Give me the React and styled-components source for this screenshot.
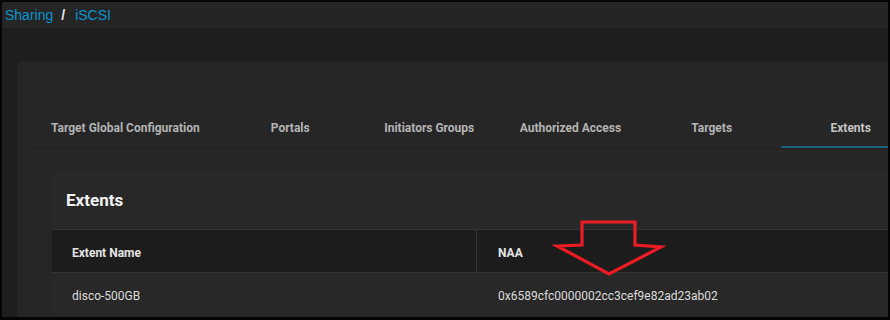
import React from 'react'
import styled, { createGlobalStyle } from 'styled-components'

const GlobalStyle = createGlobalStyle`
  html, body {
    margin: 0;
    padding: 0;
    background: #000000;
  }
  body {
    font-family: Roboto, 'Liberation Sans', sans-serif;
  }
`

const Frame = styled.div`
  width: 890px;
  height: 320px;
  box-sizing: border-box;
  border: 2px solid #050505;
  border-bottom-width: 3px;
  background-color: #1e1e1e;
  overflow: hidden;
  position: relative;
`

const TopBar = styled.div`
  height: 26px;
  background-color: #252525;
  display: flex;
  align-items: center;
  gap: 8px;
  padding-left: 3px;
  font-family: 'Liberation Sans', Arial, sans-serif;
  font-size: 14px;
`

const Crumb = styled.span`
  color: ${p => (p.$sep ? '#e6e6e6' : '#0b94cf')};
  font-weight: ${p => (p.$sep ? 700 : 400)};
  margin: ${p => (p.$sep ? '0 2px 0 0' : '0')};
`

const Main = styled.div`
  padding: 34px 0 0 15px;
`

const Card = styled.div`
  width: 1000px;
  height: 400px;
  background-color: #262626;
  border-radius: 5px;
  padding: 38px 0 0 13px;
  box-sizing: border-box;
`

const TabBar = styled.div`
  display: flex;
  border-bottom: 1px solid #202020;
  height: 48px;
`

const Tab = styled.div`
  min-width: 139px;
  padding: 8px 21px 0;
  box-sizing: border-box;
  display: flex;
  align-items: center;
  justify-content: center;
  font-size: 12px;
  font-weight: 700;
  color: ${p => (p.$active ? '#c4c4c4' : '#b4b4b4')};
  box-shadow: ${p => (p.$active ? 'inset 0 -2px 0 #1b5f7f' : 'none')};
`

const Panel = styled.div`
  margin: 22px 0 0 22px;
  background-color: #282828;
  border-radius: 4px 4px 0 0;
`

const PanelTitle = styled.div`
  height: 58px;
  display: flex;
  align-items: center;
  padding-left: 14px;
  font-size: 17px;
  font-weight: 700;
  color: #f2f2f2;
  border-bottom: 1px solid #343434;
`

const Row = styled.div`
  display: grid;
  grid-template-columns: 425px 1fr;
  height: ${p => (p.$head ? '42px' : '44px')};
  background-color: ${p => (p.$head ? '#1c1c1c' : '#282828')};
  border-bottom: 1px solid #333333;
`

const Cell = styled.div`
  display: flex;
  align-items: center;
  padding-left: ${p => (p.$first ? '20px' : '21px')};
  padding-top: ${p => (p.$head ? '3px' : '1px')};
  font-size: 12px;
  font-weight: ${p => (p.$head ? 700 : 400)};
  color: ${p => (p.$head ? '#e4e4e4' : '#dcdcdc')};
  border-right: ${p => (p.$head && p.$first ? '1px solid #353535' : 'none')};
`

const Arrow = styled.svg`
  position: absolute;
  left: 550px;
  top: 214px;
  overflow: visible;
`

const tabs = [
  'Target Global Configuration',
  'Portals',
  'Initiators Groups',
  'Authorized Access',
  'Targets',
  'Extents',
]

export default function App() {
  return (
    <>
      <GlobalStyle />
      <Frame>
        <TopBar>
          <Crumb>Sharing</Crumb>
          <Crumb $sep>/</Crumb>
          <Crumb>iSCSI</Crumb>
        </TopBar>
        <Main>
          <Card>
            <TabBar>
              {tabs.map(t => (
                <Tab key={t} $active={t === 'Extents'}>{t}</Tab>
              ))}
            </TabBar>
            <Panel>
              <PanelTitle>Extents</PanelTitle>
              <Row $head>
                <Cell $head $first>Extent Name</Cell>
                <Cell $head>NAA</Cell>
              </Row>
              <Row>
                <Cell $first>disco-500GB</Cell>
                <Cell>0x6589cfc0000002cc3cef9e82ad23ab02</Cell>
              </Row>
            </Panel>
          </Card>
        </Main>
        <Arrow width="120" height="64" viewBox="0 0 120 64">
          <polygon
            points="30,6 83,6 83,29 109,31 57,58 5,30 30,29"
            fill="none"
            stroke="#ec1c24"
            strokeWidth="3.2"
            strokeLinejoin="miter"
          />
        </Arrow>
      </Frame>
    </>
  )
}
